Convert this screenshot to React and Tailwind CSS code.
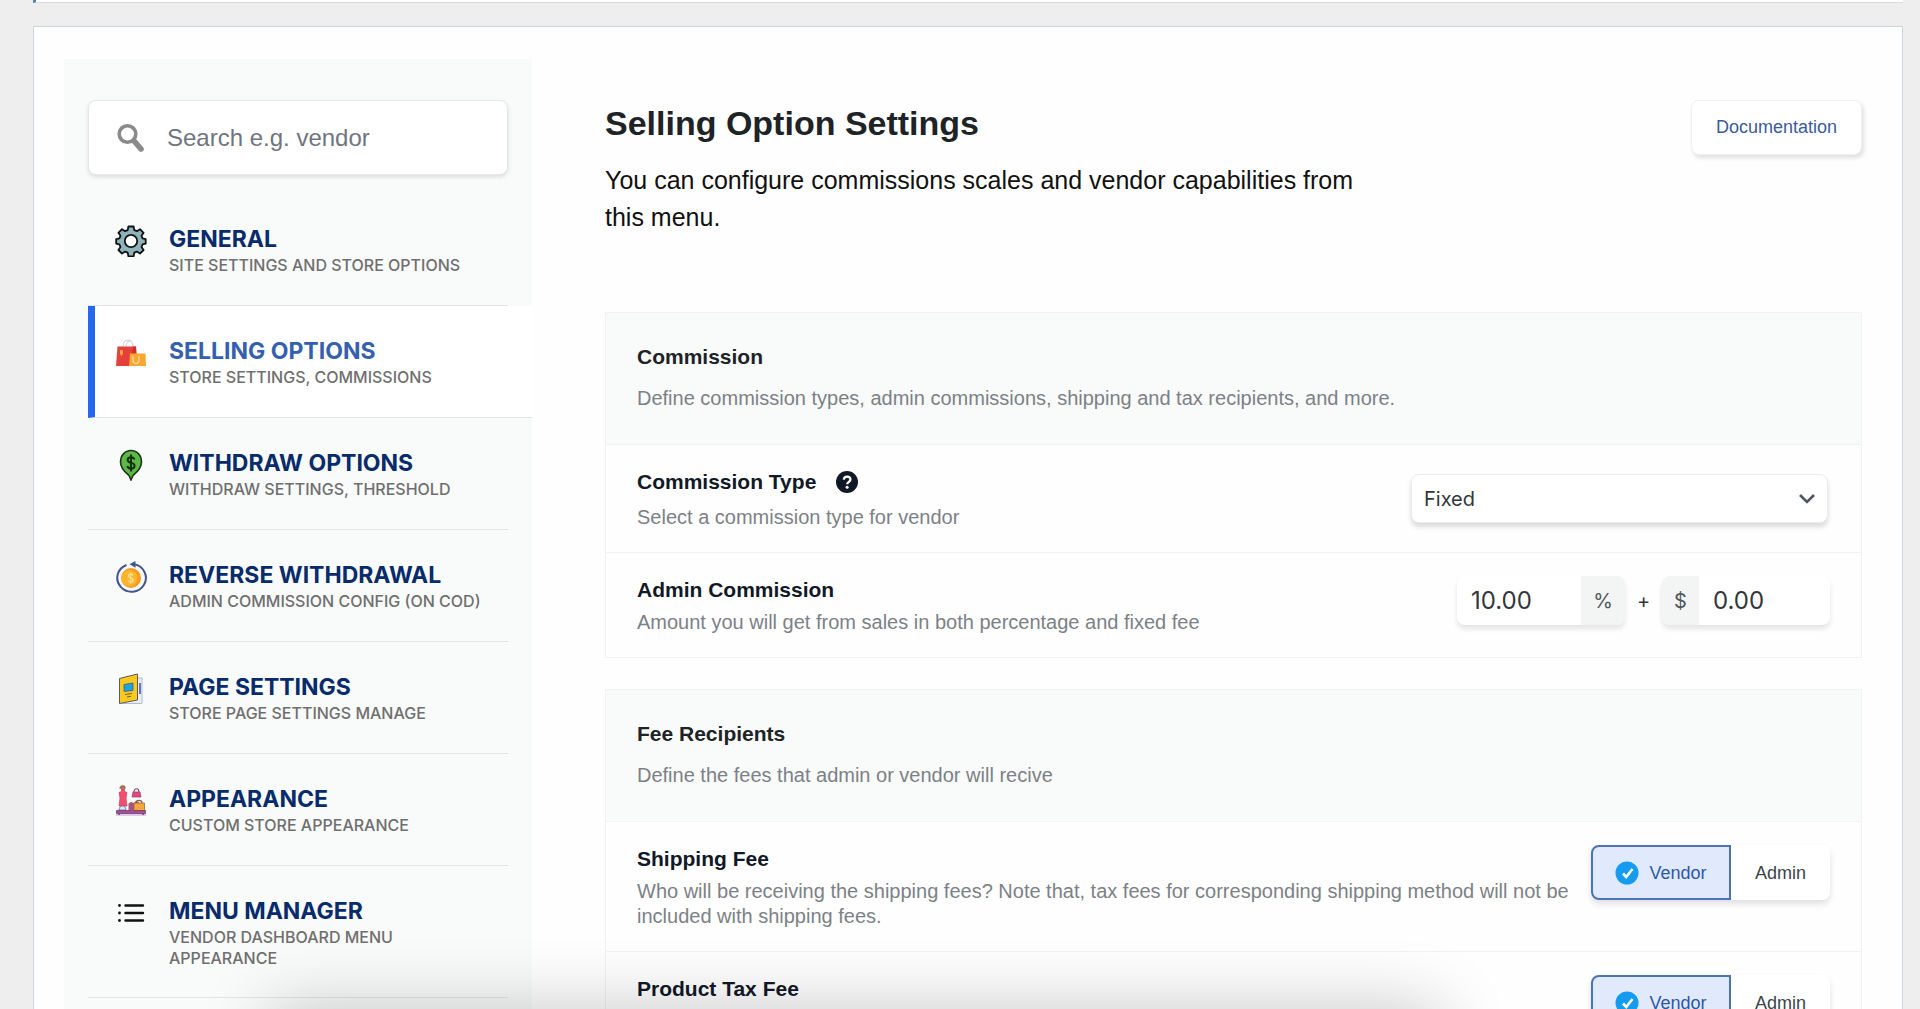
import React from "react";

const GearIcon = () => (
  <svg viewBox="0 0 32 32" className="size-8" aria-hidden="true">
    <path
      d="M13.4 1.5h5.2l.7 3.6 2.6 1.1 3.1-2 3.6 3.6-2.1 3 1.1 2.6 3.1.7v4.6l-3.1.7-1.1 2.6 2.1 3-3.6 3.6-3.1-2-2.6 1.1-.7 3.6h-5.200l-.7-3.600-2.600-1.100-3.100 2-3.600-3.600 2.100-3-1.100-2.600-3.200-.7v-4.600l3.200-.7 1.100-2.600-2.100-3L7 4.200l3.100 2 2.600-1.100z"
      fill="#8fb3bd"
      stroke="#111"
      strokeWidth="1.8"
      strokeLinejoin="round"
    />
    <circle cx="16" cy="16" r="6.2" fill="#fff" stroke="#111" strokeWidth="1.8" />
  </svg>
);

const BagsIcon = () => (
  <svg viewBox="0 0 32 32" className="size-8" aria-hidden="true">
    <path d="M8 10c0-4.500 2-7 5-7s5 2.500 5 7M11 10c0-4.500 2-6 5-6" fill="none" stroke="#d0d4d8" strokeWidth="1.100" />
    <path d="M2.500 9.500H21l1 19.500H1z" fill="#e5413c" />
    <path d="M18 9.500h3l1 19.500h-7z" fill="#cf302f" />
    <path d="M5 13h3v4l-1.500 2L5 17z" fill="#f5a531" />
    <path d="M15 16.500h15.500L31 29H14z" fill="#fba62e" />
    <path d="M18 19v3.500c0 2.500 1.200 4 3 4s3-1.500 3-4V19" fill="none" stroke="#fdd79b" strokeWidth="1.500" />
  </svg>
);

const PinDollarIcon = () => (
  <svg viewBox="0 0 32 32" className="size-8" aria-hidden="true">
    <path d="M16 1.500c6.200 0 10.500 5 10.500 11.500 0 7-5.500 11-8.500 13.500L16 31l-2-4.500C11 24 5.500 20 5.500 13 5.500 6.500 9.800 1.500 16 1.500z" fill="#5cb946" stroke="#1c3518" strokeWidth="1.600" />
    <path d="M19.500 10.500c-.5-1.600-1.800-2.300-3.500-2.300-2 0-3.400 1-3.400 2.700 0 3.900 7 1.800 7 5.800 0 1.900-1.600 2.900-3.600 2.900-1.900 0-3.300-.9-3.700-2.600M16 5.500v17" fill="none" stroke="#16300f" strokeWidth="2" />
  </svg>
);

const ReverseIcon = () => (
  <svg viewBox="0 0 32 32" className="size-8" aria-hidden="true">
    <circle cx="16" cy="17" r="10" fill="#ff9a1f" />
    <circle cx="14.500" cy="17" r="8" fill="#ffb52d" />
    <path d="M18 14.500c-.4-1-1.200-1.500-2.300-1.500-1.300 0-2.300.7-2.300 1.900 0 2.600 4.800 1.300 4.800 4 0 1.300-1.100 2.100-2.500 2.100-1.300 0-2.200-.6-2.500-1.700M15.700 11.300v11.500" fill="none" stroke="#ffe08a" strokeWidth="1.300" />
    <path d="M11.500 4A14.300 13.800 0 1 0 19 3.300" fill="none" stroke="#47548a" strokeWidth="2" />
    <path d="M14.500 3.300 20.500 0v6.800z" fill="#47548a" />
  </svg>
);

const PageIcon = () => (
  <svg viewBox="0 0 32 32" className="size-8" aria-hidden="true">
    <path d="M12 5h15v25.500H6z" fill="#e9edf8" stroke="#b4bcd3" strokeWidth="1" />
    <path d="M25 10v11" stroke="#3f56b5" strokeWidth="1.600" />
    <path d="M4.500 5.500 22.500 1v26L4.500 30.500z" fill="#fbc91d" stroke="#5b5b5f" strokeWidth="1" strokeLinejoin="round" />
    <path d="M9 11.500 18 10v7.500L9 18.500z" fill="#1ea3dd" stroke="#35618c" strokeWidth=".8" />
    <path d="m10 21.500 7-1M12 24l4-.6" stroke="#6e6235" strokeWidth="1" />
  </svg>
);

const AppearanceIcon = () => (
  <svg viewBox="0 0 32 32" className="size-8" aria-hidden="true">
    <path d="M7.500 20v5" stroke="#4b4f8d" strokeWidth="1.300" />
    <path d="M4.500 3h6M5.500 2.500C6 .5 9.500.5 10 2.500" stroke="#a06642" strokeWidth="1.500" fill="#a06642" />
    <path d="M6.500 4h3v2.500l2.500 1-1 5.500 1 8H4l1-8-1-5.500 2.500-1z" fill="#f0506e" stroke="#c93d62" strokeWidth=".7" />
    <path d="M4 25c0-3 2-4 3.500-4s3.500 1 3.500 4z" fill="#dfe6fb" stroke="#5c66a8" strokeWidth=".8" />
    <path d="M19 7.500c0-5 5-5 5 0" fill="none" stroke="#7a4a6d" strokeWidth="1.200" />
    <path d="M18 7h7l1 5h-9z" fill="#e24a7a" stroke="#9b3b60" strokeWidth=".7" />
    <path d="M13.500 18.500 16 17l3 1 2-2 3 1v8H13.500z" fill="#a3577d" />
    <path d="M19 18h10.500v8H19z" fill="#f3a63a" stroke="#a36a3c" strokeWidth=".8" />
    <path d="M21 18c0-3.500 6-3.500 6 0" fill="none" stroke="#8b5a4a" strokeWidth="1.200" />
    <path d="M1.500 25.500h29v3h-29z" fill="#b24a8a" stroke="#66407f" strokeWidth=".8" />
    <path d="M1 30h30" stroke="#d6b8e0" strokeWidth="1.500" />
    <path d="M4 28.500V30M28 28.500V30" stroke="#66407f" strokeWidth="1.500" />
  </svg>
);

const ListIcon = () => (
  <svg viewBox="0 0 32 32" className="size-8" aria-hidden="true">
    <path d="M10.500 8.500h17.500M10.500 16h17.500M10.500 23.500h17.500" stroke="#111" strokeWidth="2.400" strokeLinecap="round" />
    <circle cx="4.500" cy="8.500" r="1.400" fill="#111" />
    <circle cx="4.500" cy="16" r="1.400" fill="#111" />
    <circle cx="4.500" cy="23.500" r="1.400" fill="#111" />
  </svg>
);

const menu = [
  { title: "GENERAL", sub: "SITE SETTINGS AND STORE OPTIONS", Icon: GearIcon },
  { title: "SELLING OPTIONS", sub: "STORE SETTINGS, COMMISSIONS", Icon: BagsIcon, active: true },
  { title: "WITHDRAW OPTIONS", sub: "WITHDRAW SETTINGS, THRESHOLD", Icon: PinDollarIcon },
  { title: "REVERSE WITHDRAWAL", sub: "ADMIN COMMISSION CONFIG (ON COD)", Icon: ReverseIcon },
  { title: "PAGE SETTINGS", sub: "STORE PAGE SETTINGS MANAGE", Icon: PageIcon },
  { title: "APPEARANCE", sub: "CUSTOM STORE APPEARANCE", Icon: AppearanceIcon },
  { title: "MENU MANAGER", sub: "VENDOR DASHBOARD MENU APPEARANCE", Icon: ListIcon },
];

function Sidebar() {
  return (
    <aside className="w-[468px] shrink-0 bg-[#f9fafa] pl-6 pt-[41px]">
      <label className="mr-6 flex h-[75px] items-center rounded-lg border border-[#e6e8e8] bg-white pl-7 shadow-[0_2px_4px_rgba(0,0,0,0.12)]">
        <svg viewBox="0 0 28 30" className="h-[30px] w-7 shrink-0" aria-hidden="true">
          <circle cx="10.500" cy="11" r="8.300" fill="none" stroke="#8a8a8a" strokeWidth="3.600" />
          <path d="m17.500 18.500 6.500 7.500" stroke="#8a8a8a" strokeWidth="5.600" strokeLinecap="round" />
        </svg>
        <input
          type="text"
          aria-label="Search settings"
          placeholder="Search e.g. vendor"
          className="ml-[22px] w-full bg-transparent text-2xl text-gray-800 outline-none placeholder:text-[#6f7580]"
        />
      </label>
      <nav className="mt-[19px] font-['Inter',sans-serif]">
        {menu.map(({ title, sub, Icon, active }) => (
          <a
            key={title}
            href="#"
            className={
              active
                ? "flex min-h-28 gap-[22px] border-b border-l-[7px] border-b-[#e2e5e8] border-l-[#2467f0] bg-white pl-5 pt-[31px]"
                : "mr-6 flex min-h-28 gap-[22px] border-b border-[#e2e4e6] pb-7 pl-[27px] pt-[31px]"
            }
          >
            <span className="shrink-0">
              <Icon />
            </span>
            <span className="max-w-[320px]">
              <span
                className={
                  active
                    ? "block text-[23px] font-bold leading-7 text-[#3560b0]"
                    : "block text-[23px] font-bold leading-7 text-[#072b6b]"
                }
              >
                {title}
              </span>
              <span className="mt-0.5 block text-base font-medium leading-[21px] text-[#6f6f6f]">{sub}</span>
            </span>
          </a>
        ))}
      </nav>
    </aside>
  );
}

function SectionHead({ title, text }) {
  return (
    <header className="border-b border-[#f0f2f3] bg-[#f9fafa] px-[31px] pb-8 pt-[30px]">
      <h2 className="text-[21px] font-bold leading-7 text-[#1d2327]">{title}</h2>
      <p className="mt-[13px] text-xl leading-7 text-[#7c8187]">{text}</p>
    </header>
  );
}

function Row({ title, text, extra, children }) {
  return (
    <div className="flex items-start justify-between gap-5 border-b border-[#f0f2f3] px-[31px] pb-[22px] pt-[23px] last:border-b-0">
      <div>
        <h3
          className={
            extra
              ? "flex items-center gap-5 pb-[3px] text-[21px] font-bold leading-7 text-[#111827]"
              : "text-[21px] font-bold leading-7 text-[#111827]"
          }
        >
          {title}
          {extra}
        </h3>
        {text && <p className="mt-1.5 text-xl leading-[25px] text-[#7c8187]">{text}</p>}
      </div>
      {children}
    </div>
  );
}

function VendorAdmin({ label }) {
  return (
    <div
      role="group"
      aria-label={label}
      className="flex h-[55px] shrink-0 rounded-lg text-lg shadow-[0_4px_6px_rgba(0,0,0,0.12)]"
    >
      <button type="button" aria-pressed="true" className="flex w-[140px] items-center justify-center gap-2.5 rounded-l-lg border-2 border-[#4a72b5] bg-[#e1eafd] text-[#2b57a8]">
        <svg viewBox="0 0 24 24" className="size-6" aria-hidden="true">
          <circle cx="12" cy="12" r="11.500" fill="#159bf0" />
          <path d="m8 12.500 3.200 3.500L17.500 8" fill="none" stroke="#fff" strokeWidth="2.600" />
        </svg>
        Vendor
      </button>
      <button type="button" aria-pressed="false" className="w-[99px] rounded-r-lg bg-white text-[#3c434a]">
        Admin
      </button>
    </div>
  );
}

export default function App() {
  return (
    <div className="relative h-screen overflow-hidden bg-[#eeeeee] pl-[33px] pr-[17px] font-['Liberation_Sans',Arial,sans-serif]">
      <div className="h-[3px] border-b border-l-[3px] border-b-[#d9dcde] border-l-[#4a80b8] bg-white" />
      <div className="mt-[23px] flex border border-[#ccd4da] bg-[#fefefe] pb-8 pl-[30px] pr-10 pt-8">
        <Sidebar />
        <main className="ml-[73px] min-w-0 flex-1 pt-[41px]">
          <div className="flex items-start justify-between">
            <div className="max-w-[760px]">
              <h1 className="text-[34px] font-bold leading-[46px] text-[#1d2327]">Selling Option Settings</h1>
              <p className="mt-4 text-[25px] leading-[37px] text-[#111]">
                You can configure commissions scales and vendor capabilities from this menu.
              </p>
            </div>
            <a href="#" className="flex h-[55px] items-center rounded-lg border border-[#f0f0f0] bg-white px-6 pb-0.5 text-lg text-[#3a5a9f] shadow-[2px_3px_4px_rgba(0,0,0,0.12)]">
              Documentation
            </a>
          </div>

          <section className="mt-[76px] border border-[#f0f2f3]">
            <SectionHead
              title="Commission"
              text="Define commission types, admin commissions, shipping and tax recipients, and more."
            />
            <Row
              title="Commission Type"
              text="Select a commission type for vendor"
              extra={
                <svg viewBox="0 0 22 22" className="size-[22px]" aria-hidden="true">
                  <circle cx="11" cy="11" r="11" fill="#111827" />
                  <path d="M7.800 8.600c.2-2 1.500-3 3.300-3 1.900 0 3.300 1.100 3.300 2.800 0 2.400-3.200 2.400-3.200 4.900" fill="none" stroke="#fff" strokeWidth="2.300" />
                  <circle cx="11.100" cy="16.300" r="1.500" fill="#fff" />
                </svg>
              }
            >
              <div className="relative mr-0.5 mt-1.5 shrink-0">
                <select
                  aria-label="Commission Type"
                  className="h-[49px] w-[417px] appearance-none rounded-lg border border-[#ececec] bg-white px-3 font-['Inter',sans-serif] text-xl text-[#32373c] shadow-[0_4px_5px_rgba(0,0,0,0.14)]"
                >
                  <option>Fixed</option>
                </select>
                <svg viewBox="0 0 18 12" className="pointer-events-none absolute right-3 top-[19px] h-3 w-[18px]" aria-hidden="true">
                  <path d="m2 2 7 7 7-7" fill="none" stroke="#50575e" strokeWidth="2.600" />
                </svg>
              </div>
            </Row>
            <Row title="Admin Commission" text="Amount you will get from sales in both percentage and fixed fee">
              <div className="flex shrink-0 items-center font-['Inter',sans-serif] text-[#32373c]">
                <div className="flex h-[49px] overflow-hidden rounded-lg bg-white shadow-[0_4px_5px_rgba(0,0,0,0.10)]">
                  <input aria-label="Percentage" defaultValue="10.00" className="w-[124px] px-3.5 text-2xl outline-none" />
                  <span className="flex w-11 items-center justify-center bg-[#f3f4f4] text-xl text-[#50575e]">%</span>
                </div>
                <span className="w-[37px] text-center text-xl">+</span>
                <div className="flex h-[49px] overflow-hidden rounded-lg bg-white shadow-[0_4px_5px_rgba(0,0,0,0.10)]">
                  <span className="flex w-[37px] items-center justify-center bg-[#f3f4f4] text-xl text-[#50575e]">$</span>
                  <input aria-label="Fixed fee" defaultValue="0.00" className="w-[131px] px-3.5 text-2xl outline-none" />
                </div>
              </div>
            </Row>
          </section>

          <section className="mt-[31px] border border-[#f0f2f3]">
            <SectionHead title="Fee Recipients" text="Define the fees that admin or vendor will recive" />
            <Row
              title="Shipping Fee"
              text="Who will be receiving the shipping fees? Note that, tax fees for corresponding shipping method will not be included with shipping fees."
            >
              <VendorAdmin label="Shipping Fee" />
            </Row>
            <Row title="Product Tax Fee">
              <VendorAdmin label="Product Tax Fee" />
            </Row>
          </section>
        </main>
      </div>
      <div className="pointer-events-none absolute -bottom-24 left-[14%] right-[25%] h-24 shadow-[0_0_70px_0_rgba(0,0,0,0.22)]" />
    </div>
  );
}
